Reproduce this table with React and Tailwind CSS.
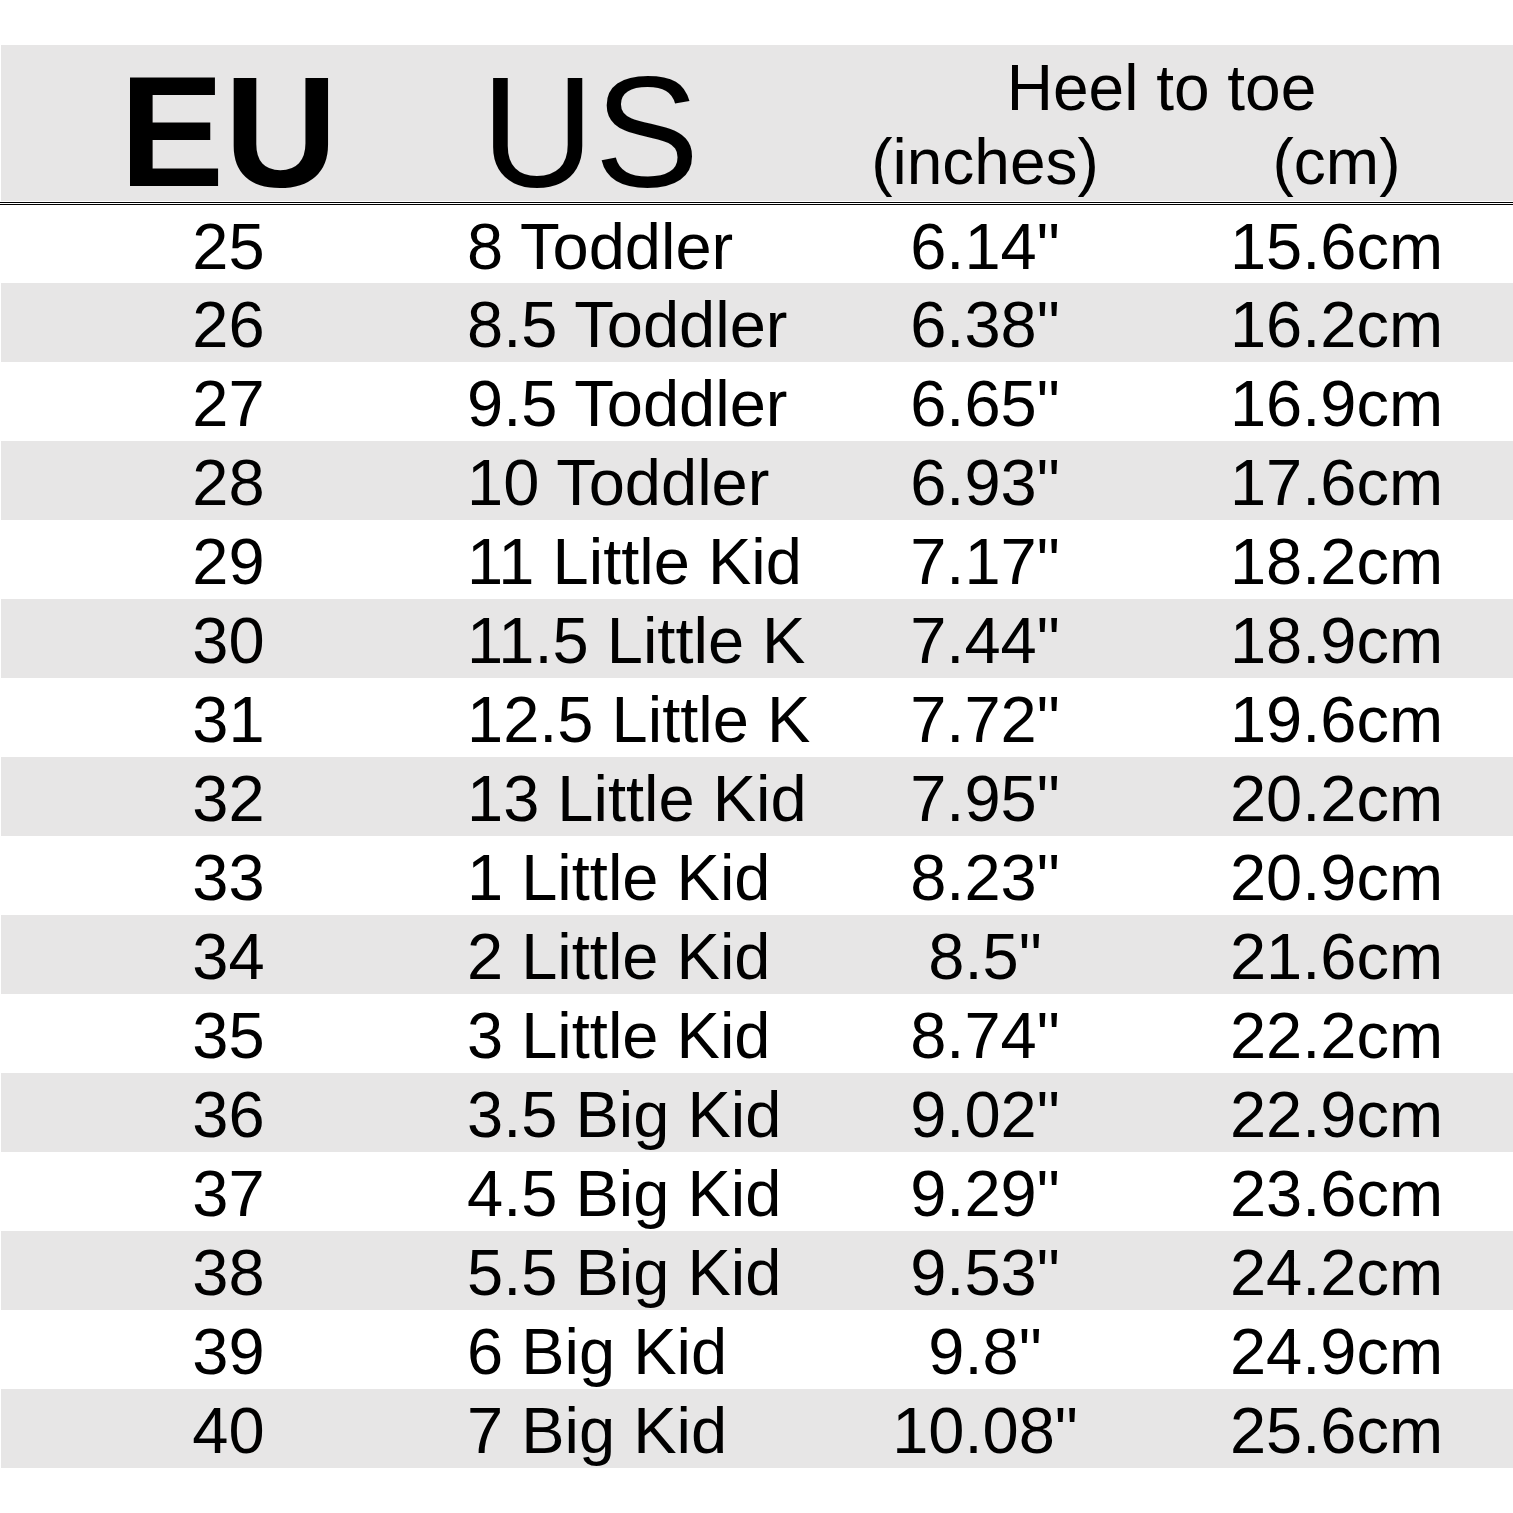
import React from "react";

const rows = [
  ["25", "8 Toddler", "6.14\"", "15.6cm"],
  ["26", "8.5 Toddler", "6.38\"", "16.2cm"],
  ["27", "9.5 Toddler", "6.65\"", "16.9cm"],
  ["28", "10 Toddler", "6.93\"", "17.6cm"],
  ["29", "11 Little Kid", "7.17\"", "18.2cm"],
  ["30", "11.5 Little K", "7.44\"", "18.9cm"],
  ["31", "12.5 Little K", "7.72\"", "19.6cm"],
  ["32", "13 Little Kid", "7.95\"", "20.2cm"],
  ["33", "1 Little Kid", "8.23\"", "20.9cm"],
  ["34", "2 Little Kid", "8.5\"", "21.6cm"],
  ["35", "3 Little Kid", "8.74\"", "22.2cm"],
  ["36", "3.5 Big Kid", "9.02\"", "22.9cm"],
  ["37", "4.5 Big Kid", "9.29\"", "23.6cm"],
  ["38", "5.5 Big Kid", "9.53\"", "24.2cm"],
  ["39", "6 Big Kid", "9.8\"", "24.9cm"],
  ["40", "7 Big Kid", "10.08\"", "25.6cm"],
];

export default function App() {
  return (
    <div
      className="w-[1513px] h-[1513px] bg-white text-black overflow-hidden"
      style={{ fontFamily: '"Liberation Sans", Arial, sans-serif' }}
    >
      <div className="h-[45px]" />
      {/* Header */}
      <div className="ml-[1px] h-[156px] bg-[#e7e6e6] flex items-start">
        <div className="w-[455px] shrink-0 text-center font-bold text-[157px] leading-[138px] pt-[18px]">
          EU
        </div>
        <div className="w-[354px] shrink-0 pl-[25px] text-[157px] leading-[138px] pt-[18px] whitespace-nowrap">
          US
        </div>
        <div className="flex-1 flex flex-col pt-[6px] text-[64px] leading-[74px] whitespace-nowrap">
          <div className="text-center">Heel to toe</div>
          <div className="flex">
            <div className="w-[350px] text-center">(inches)</div>
            <div className="flex-1 text-center">(cm)</div>
          </div>
        </div>
      </div>
      {/* Double rule */}
      <div className="h-[1px]" />
      <div className="h-[1px] bg-black" />
      <div className="h-[1px]" />
      <div className="h-[1px] bg-black" />
      {/* Rows */}
      {rows.map((r, i) => (
        <div
          key={r[0]}
          className={
            "flex items-start text-[65px] leading-[73px] whitespace-nowrap " +
            (i === 0 ? "h-[78px] " : "h-[79px] ") +
            (i % 2 === 1 ? "ml-[1px] bg-[#e7e6e6]" : "ml-[1px] bg-white")
          }
        >
          <div className="w-[455px] shrink-0 text-center pt-[5px]">{r[0]}</div>
          <div className="w-[354px] shrink-0 pl-[11px] pt-[5px]">{r[1]}</div>
          <div className="w-[350px] shrink-0 text-center pt-[5px]">{r[2]}</div>
          <div className="flex-1 text-center pt-[5px]">{r[3]}</div>
        </div>
      ))}
    </div>
  );
}
